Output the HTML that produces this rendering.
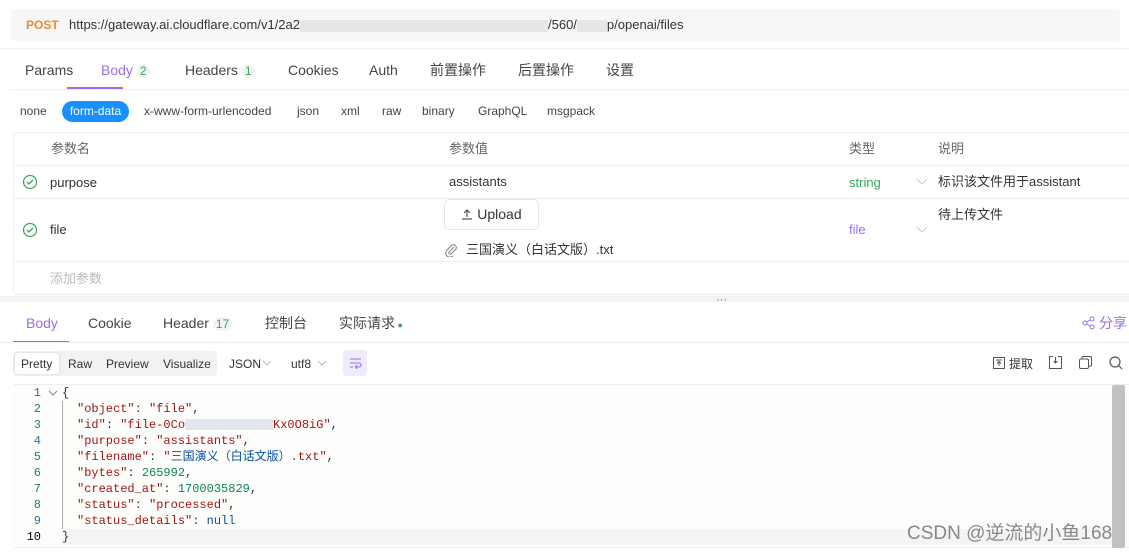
<html><head><style>
*{margin:0;padding:0;box-sizing:border-box}
body{width:1129px;height:552px;background:#fff;font-family:"Liberation Sans","Noto Sans CJK SC",sans-serif;font-size:13px;color:#333;position:relative;overflow:hidden}
.a{position:absolute;white-space:nowrap;line-height:18px}
.mono{font-family:"Liberation Mono","Noto Sans CJK SC",monospace;font-size:12px;white-space:pre;line-height:16px}
.s{color:#a31515}.n{color:#098658}.k{color:#0451a5}
.ln{position:absolute;left:10px;width:31px;text-align:right;color:#237893;font-family:"Liberation Mono",monospace;font-size:12px;line-height:16px}
.badge{color:#3aa657;background:#f3f3f3;border-radius:8px;padding:0 3px;font-size:12px}
</style></head><body>
<div class="a" style="left:10px;top:9px;width:1110px;height:32px;background:#f7f7f7;border-radius:4px"></div>
<div class="a" style="left:26px;top:16px;color:#f5862a;font-weight:bold;font-size:12px">POST</div>
<div class="a" style="left:69px;top:16px;color:#333">https://gateway.ai.cloudflare.com/v1/2a2<span style="display:inline-block;width:248px;height:12px;background:#e6e6e6;vertical-align:middle"></span>/560/<span style="display:inline-block;width:30px;height:12px;background:#e6e6e6;vertical-align:middle"></span>p/openai/files</div>
<div class="a" style="left:0;top:48px;width:1129px;height:1px;background:#f0f0f0"></div>
<div class="a" style="left:25px;top:61px;color:#444;font-size:14px">Params</div>
<div class="a" style="left:101px;top:61px;color:#9b6cf0;font-size:14px">Body <span class="badge">2</span></div>
<div class="a" style="left:67px;top:87px;width:56px;height:2px;background:#9b6cf0"></div>
<div class="a" style="left:185px;top:61px;color:#444;font-size:14px">Headers <span class="badge">1</span></div>
<div class="a" style="left:288px;top:61px;color:#444;font-size:14px">Cookies</div>
<div class="a" style="left:369px;top:61px;color:#444;font-size:14px">Auth</div>
<div class="a" style="left:430px;top:61px;color:#444;font-size:14px">前置操作</div>
<div class="a" style="left:518px;top:61px;color:#444;font-size:14px">后置操作</div>
<div class="a" style="left:606px;top:61px;color:#444;font-size:14px">设置</div>
<div class="a" style="left:10px;top:89px;width:1119px;height:1px;background:#f0f0f0"></div>
<div class="a" style="left:20px;top:102px;font-size:12px;color:#444">none</div>
<div class="a" style="left:62px;top:101px;width:67px;height:21px;border-radius:11px;background:#1890ff;color:#fff;font-size:12px;text-align:center;line-height:21px">form-data</div>
<div class="a" style="left:144px;top:102px;font-size:12px;color:#444">x-www-form-urlencoded</div>
<div class="a" style="left:297px;top:102px;font-size:12px;color:#444">json</div>
<div class="a" style="left:341px;top:102px;font-size:12px;color:#444">xml</div>
<div class="a" style="left:382px;top:102px;font-size:12px;color:#444">raw</div>
<div class="a" style="left:422px;top:102px;font-size:12px;color:#444">binary</div>
<div class="a" style="left:478px;top:102px;font-size:12px;color:#444">GraphQL</div>
<div class="a" style="left:547px;top:102px;font-size:12px;color:#444">msgpack</div>
<div class="a" style="left:13px;top:132px;width:1130px;height:163px;border:1px solid #eee;border-radius:4px"></div>
<div class="a" style="left:13px;top:165px;width:1116px;height:1px;background:#eee"></div>
<div class="a" style="left:13px;top:198px;width:1116px;height:1px;background:#eee"></div>
<div class="a" style="left:13px;top:261px;width:1116px;height:1px;background:#eee"></div>
<div class="a" style="left:51px;top:140px;color:#666">参数名</div>
<div class="a" style="left:449px;top:140px;color:#666">参数值</div>
<div class="a" style="left:849px;top:140px;color:#666">类型</div>
<div class="a" style="left:938px;top:140px;color:#666">说明</div>
<svg class="a" style="left:22px;top:174px" width="16" height="16"><circle cx="8" cy="8" r="6.5" fill="none" stroke="#3aa657" stroke-width="1.2"/><path d="M5 8l2 2 4-4" fill="none" stroke="#3aa657" stroke-width="1.3"/></svg>
<div class="a" style="left:50px;top:174px">purpose</div>
<div class="a" style="left:449px;top:173px">assistants</div>
<div class="a" style="left:849px;top:174px;color:#3aa657">string</div>
<svg class="a" style="left:916px;top:178px" width="12" height="8"><path d="M1 1l5 5 5-5" fill="none" stroke="#ccc"/></svg>
<div class="a" style="left:938px;top:173px">标识该文件用于assistant</div>
<svg class="a" style="left:22px;top:222px" width="16" height="16"><circle cx="8" cy="8" r="6.5" fill="none" stroke="#3aa657" stroke-width="1.2"/><path d="M5 8l2 2 4-4" fill="none" stroke="#3aa657" stroke-width="1.3"/></svg>
<div class="a" style="left:50px;top:221px">file</div>
<div class="a" style="left:444px;top:199px;width:95px;height:31px;border:1px solid #e5e5e5;border-radius:5px;text-align:center;line-height:29px;font-size:14px"><svg width="12" height="12" style="vertical-align:-1px"><path d="M6 9V2M3 5l3-3 3 3M1 11h10" fill="none" stroke="#555" stroke-width="1.2"/></svg> Upload</div>
<svg class="a" style="left:445px;top:243px" width="12" height="14"><path d="M9 4L4 9a1.5 1.5 0 0 0 2 2l5-5a3 3 0 0 0-4-4L2 7a4 4 0 0 0 6 6" fill="none" stroke="#888" stroke-width="1.1"/></svg>
<div class="a" style="left:466px;top:241px">三国演义（白话文版）.txt</div>
<div class="a" style="left:849px;top:221px;color:#9b6cf0">file</div>
<svg class="a" style="left:916px;top:226px" width="12" height="8"><path d="M1 1l5 5 5-5" fill="none" stroke="#ccc"/></svg>
<div class="a" style="left:938px;top:206px">待上传文件</div>
<div class="a" style="left:50px;top:270px;color:#bbb">添加参数</div>
<div class="a" style="left:0;top:296px;width:1129px;height:6px;background:#f2f2f7"></div>
<div class="a" style="left:716px;top:291px;color:#666;font-size:11px">···</div>
<div class="a" style="left:26px;top:314px;color:#9b6cf0;font-size:14px">Body</div>
<div class="a" style="left:13px;top:341px;width:56px;height:2px;background:#9b6cf0"></div>
<div class="a" style="left:88px;top:314px;color:#444;font-size:14px">Cookie</div>
<div class="a" style="left:163px;top:314px;color:#444;font-size:14px">Header <span class="badge">17</span></div>
<div class="a" style="left:265px;top:314px;color:#444;font-size:14px">控制台</div>
<div class="a" style="left:339px;top:314px;color:#444;font-size:14px">实际请求<span style="color:#3aa657;font-size:9px"> ●</span></div>
<svg class="a" style="left:1082px;top:316px" width="13" height="14"><circle cx="3" cy="7" r="2" fill="none" stroke="#9b6cf0"/><circle cx="10" cy="3" r="2" fill="none" stroke="#9b6cf0"/><circle cx="10" cy="11" r="2" fill="none" stroke="#9b6cf0"/><path d="M5 6l3-2M5 8l3 2" stroke="#9b6cf0"/></svg>
<div class="a" style="left:1099px;top:314px;color:#9b6cf0;font-size:14px">分享</div>
<div class="a" style="left:0;top:342px;width:1129px;height:1px;background:#eee"></div>
<div class="a" style="left:13px;top:351px;width:204px;height:25px;background:#f2f2f2;border-radius:4px"></div>
<div class="a" style="left:15px;top:353px;width:44px;height:21px;background:#fff;border-radius:3px;box-shadow:0 0 2px #ccc"></div>
<div class="a" style="left:21px;top:355px;font-size:12px">Pretty</div>
<div class="a" style="left:68px;top:355px;font-size:12px">Raw</div>
<div class="a" style="left:106px;top:355px;font-size:12px">Preview</div>
<div class="a" style="left:163px;top:355px;font-size:12px">Visualize</div>
<div class="a" style="left:229px;top:355px;font-size:12px">JSON</div>
<svg class="a" style="left:262px;top:360px" width="10" height="6"><path d="M1 1l4 4 4-4" fill="none" stroke="#bbb"/></svg>
<div class="a" style="left:291px;top:355px;font-size:12px">utf8</div>
<svg class="a" style="left:317px;top:360px" width="10" height="6"><path d="M1 1l4 4 4-4" fill="none" stroke="#bbb"/></svg>
<div class="a" style="left:343px;top:350px;width:24px;height:26px;background:#efeafc;border-radius:4px"></div>
<svg class="a" style="left:349px;top:357px" width="13" height="12"><path d="M1 2h11M1 6h9a2 2 0 0 1 0 4H7M8 8l-1.5 2L8 12M1 10h3" fill="none" stroke="#9b6cf0" stroke-width="1.1"/></svg>
<svg class="a" style="left:993px;top:357px" width="12" height="12"><rect x="0.5" y="0.5" width="11" height="11" fill="none" stroke="#555"/><path d="M3 3h6M6 9V5M4 6.5l2-2 2 2" fill="none" stroke="#555"/></svg>
<div class="a" style="left:1009px;top:355px;font-size:12px">提取</div>
<svg class="a" style="left:1049px;top:356px" width="13" height="13"><path d="M4 .5H.5v12h12V.5H9M6.5 1v6M4.5 5l2 2 2-2" fill="none" stroke="#555"/></svg>
<svg class="a" style="left:1079px;top:356px" width="13" height="13"><rect x="0.5" y="3" width="9" height="9.5" rx="1.5" fill="none" stroke="#555"/><path d="M3 3V1.5A1 1 0 0 1 4 .5h7.5a1 1 0 0 1 1 1V9a1 1 0 0 1-1 1H10" fill="none" stroke="#555"/></svg>
<svg class="a" style="left:1109px;top:356px" width="14" height="14"><circle cx="6" cy="6" r="5" fill="none" stroke="#555" stroke-width="1.2"/><path d="M9.5 9.5l3.5 3.5" stroke="#555" stroke-width="1.2"/></svg>
<div class="a" style="left:13px;top:384px;width:1116px;height:164px;background:#fdfdfb;border-top:1px solid #eee;border-bottom:1px solid #eee"></div>
<div class="a" style="left:1112px;top:385px;width:13px;height:163px;background:#c1c1c1;border-radius:2px"></div>
<div class="a" style="left:62px;top:401px;width:1px;height:128px;background:#aaa"></div>
<div class="a" style="left:62px;top:529px;width:1050px;height:16px;background:#f4f4f4"></div>
<div class="ln" style="top:385px">1</div><div class="ln" style="top:401px">2</div><div class="ln" style="top:417px">3</div><div class="ln" style="top:433px">4</div><div class="ln" style="top:449px">5</div><div class="ln" style="top:465px">6</div><div class="ln" style="top:481px">7</div><div class="ln" style="top:497px">8</div><div class="ln" style="top:513px">9</div><div class="ln" style="top:529px;color:#000">10</div>
<svg class="a" style="left:48px;top:390px" width="10" height="6"><path d="M1 1l4 4 4-4" fill="none" stroke="#888"/></svg>
<div class="a mono" style="left:62px;top:385px">{</div>
<div class="a mono" style="left:77px;top:401px"><span class="s">"object"</span>: <span class="s">"file"</span>,</div>
<div class="a mono" style="left:77px;top:417px"><span class="s">"id"</span>: <span class="s">"file-0Co<span style="display:inline-block;width:88px;height:11px;background:#e4e8ee;vertical-align:middle"></span>Kx0O8iG"</span>,</div>
<div class="a mono" style="left:77px;top:433px"><span class="s">"purpose"</span>: <span class="s">"assistants"</span>,</div>
<div class="a mono" style="left:77px;top:449px"><span class="s">"filename"</span>: <span class="s">"<span class="k">三国演义（白话文版）</span>.txt"</span>,</div>
<div class="a mono" style="left:77px;top:465px"><span class="s">"bytes"</span>: <span class="n">265992</span>,</div>
<div class="a mono" style="left:77px;top:481px"><span class="s">"created_at"</span>: <span class="n">1700035829</span>,</div>
<div class="a mono" style="left:77px;top:497px"><span class="s">"status"</span>: <span class="s">"processed"</span>,</div>
<div class="a mono" style="left:77px;top:513px"><span class="s">"status_details"</span>: <span class="k">null</span></div>
<div class="a mono" style="left:62px;top:529px">}</div>
<div class="a" style="left:907px;top:522px;font-size:19px;line-height:24px;color:#888">CSDN @逆流的小鱼168</div>
</body></html>
